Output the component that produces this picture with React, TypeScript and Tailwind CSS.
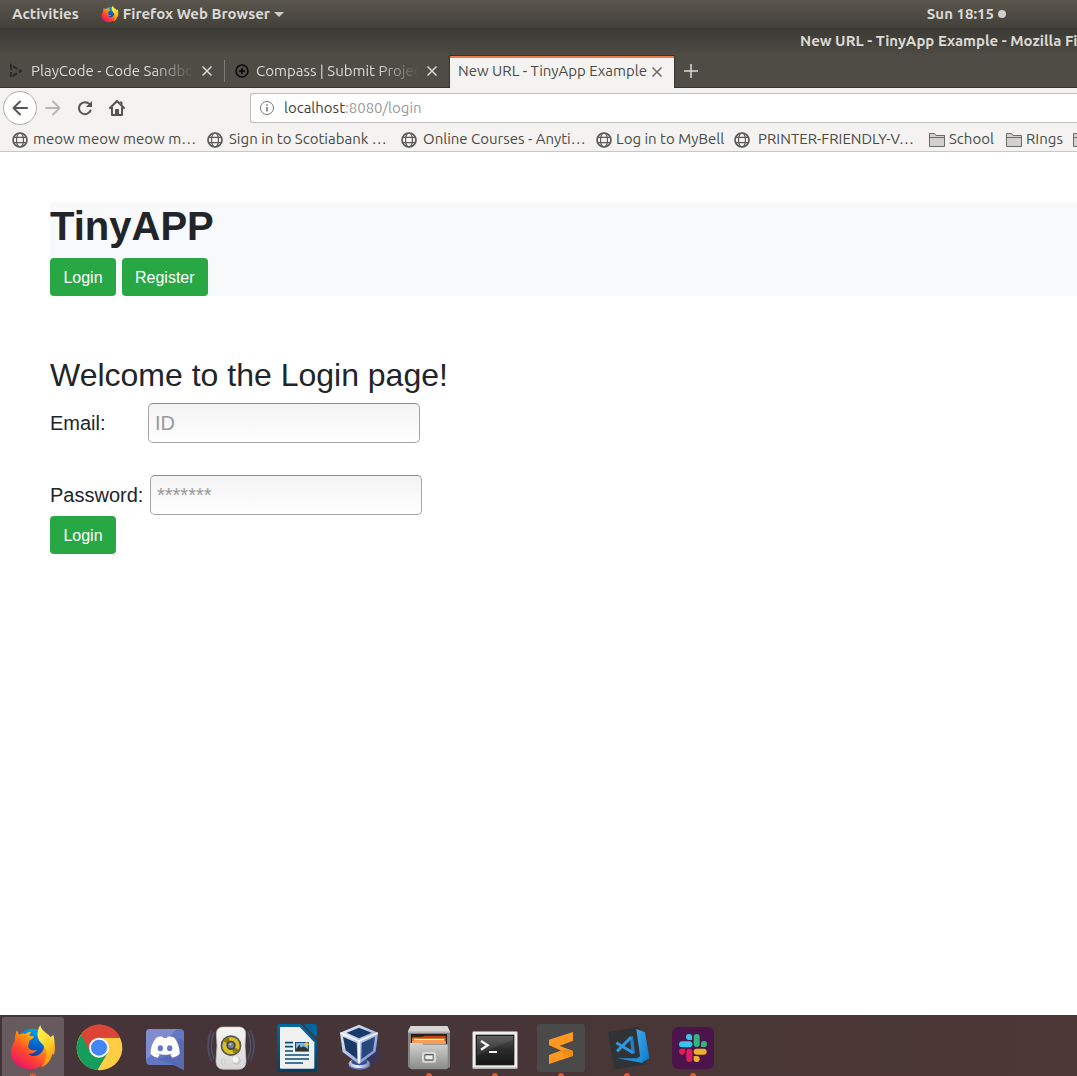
import React from "react";

const barFont = 'font-["Ubuntu","Noto_Sans",sans-serif]';

function FirefoxArt({ id }: { id: string }) {
  return (
    <>
      <defs>
        <linearGradient id={id + "a"} x1="0.8" y1="0" x2="0.1" y2="0.9">
          <stop offset="0" stopColor="#fff14a" />
          <stop offset="0.35" stopColor="#ff9a0c" />
          <stop offset="0.65" stopColor="#ff4530" />
          <stop offset="1" stopColor="#e8126e" />
        </linearGradient>
        <linearGradient id={id + "b"} x1="0.6" y1="0" x2="0.4" y2="1">
          <stop offset="0" stopColor="#00a5e8" />
          <stop offset="0.5" stopColor="#0560cf" />
          <stop offset="1" stopColor="#242a80" />
        </linearGradient>
        <linearGradient id={id + "c"} x1="0.2" y1="0" x2="0.6" y2="1">
          <stop offset="0" stopColor="#fff45a" />
          <stop offset="0.5" stopColor="#ffd62c" />
          <stop offset="1" stopColor="#ff8a0a" />
        </linearGradient>
      </defs>
      <circle cx="98" cy="106" r="50" fill={`url(#${id}b)`} />
      <path
        d="M51 61l6 13c8-4 13-4 18-2 6-5 13-7 20-7-5 4-7 9-6 13l13 1c-1 7-8 9-14 13l-2 11c-4 7 1 17 12 18 9 1 15-4 12-1-4 8-15 13-26 11 10 9 26 9 36 1 11-9 14-21 10-33l30-24c9 29 1 60-17 78-29 33-83 33-104-2-13-22-4-43 5-58 1-12 2-22 7-32z"
        fill={`url(#${id}a)`}
      />
      <path
        d="M121 45c2 14 13 20 25 30 18 17 23 40 15 61l-3-8c-4 21-16 36-34 44 15-21 20-40 11-59-5-11-19-17-22-33-2-14 2-25 8-35z"
        fill={`url(#${id}c)`}
      />
    </>
  );
}

function ChromeArt() {
  return (
    <>
      <circle cx="297" cy="113" r="67" fill="#ffce44" />
      <path d="M297 113L243 74a67 67 0 0 1 117 9z" fill="#db4437" />
      <path d="M243 74a67 67 0 0 0 50 106l31-52-27-15-31-4z" fill="#159d5b" />
      <path d="M297 83h63a67 67 0 0 1-67 97l31-52z" fill="#ffce44" />
      <path d="M243 74l24 44 6-22 24-13h63a67 67 0 0 0-117-9z" fill="#db4437" />
      <circle cx="297" cy="113" r="30" fill="#f3f3f3" />
      <circle cx="297" cy="113" r="24" fill="#4286f5" />
    </>
  );
}

function DiscordArt() {
  return (
    <>
      <path d="M450 57h90q12 0 12 12v111l-30-15h-72q-12 0-12-12V69q0-12 12-12z" fill="#6478c1" />
      <path d="M450 57h80l-92 92V69q0-12 12-12z" fill="#7f8dcf" />
      <path d="M540 84l12 12v84l-30-15-51-17 30-10z" fill="#576bb5" />
      <path
        d="M468 84c9-5 16-5 20-4l2 4h11l2-4c5-1 13 0 21 4 10 14 16 32 15 48-8 7-15 10-22 11l-6-8 8-5c-15 6-33 6-48 0l8 5-6 8c-8-1-15-5-21-11-1-17 5-34 16-48z"
        fill="#fff"
      />
      <ellipse cx="481" cy="115" rx="8" ry="9" fill="#6678c3" />
      <ellipse cx="509" cy="115" rx="8" ry="9" fill="#6678c3" />
    </>
  );
}

function SpeakerArt() {
  return (
    <>
      <defs>
        <linearGradient id="spk" x1="0" y1="0" x2="0" y2="1">
          <stop offset="0" stopColor="#f6f6f5" />
          <stop offset="1" stopColor="#d6d6d5" />
        </linearGradient>
      </defs>
      <g fill="none" stroke="#56668c" strokeWidth="4">
        <path d="M42 66q-16 40 0 82" opacity=".7" />
        <path d="M34 60q-18 48 0 94" opacity=".5" />
        <path d="M28 72q-10 34 0 68" opacity=".35" />
        <path d="M144 66q16 40 0 82" opacity=".7" />
        <path d="M152 60q18 48 0 94" opacity=".5" />
        <path d="M158 72q10 34 0 68" opacity=".35" />
      </g>
      <path
        d="M68 51h50q18 1 19 20l-2 36 3 46q0 24-22 25H70q-22-1-22-25l3-46-2-36q1-19 19-20z"
        fill="url(#spk)"
        stroke="#c4c4c2"
        strokeWidth="2"
      />
      <circle cx="93" cy="107" r="31" fill="#56564f" />
      <circle cx="93" cy="107" r="26" fill="#dcc01f" />
      <path d="M93 107L70 94a25 25 0 0 1 16-12zM93 107l24 12a25 25 0 0 1-16 12z" fill="#917b0d" />
      <circle cx="93" cy="106" r="14" fill="#42454a" />
      <circle cx="93" cy="106" r="9" fill="#787f89" />
      <circle cx="91" cy="103" r="3" fill="#d7dce1" />
      <circle cx="110" cy="152" r="12" fill="#c8c8c7" />
      <circle cx="107" cy="149" r="9" fill="#f6f6f5" />
      <path d="M64 151l6-4 6 4v9l-6 4-6-4z" fill="none" stroke="#c4c4c3" strokeWidth="2" />
    </>
  );
}

function WriterArt() {
  return (
    <>
      <defs>
        <linearGradient id="wr" x1="0" y1="0" x2="0" y2="1">
          <stop offset="0" stopColor="#0369a3" />
          <stop offset="1" stopColor="#063f62" />
        </linearGradient>
      </defs>
      <path d="M240 42h62l49 50v86q0 8-8 8H240q-8 0-8-8V50q0-8 8-8z" fill="url(#wr)" />
      <path d="M314 42h29q8 0 8 8v28q-4 3-8-1l-27-27q-5-5-2-8z" fill="#0365a0" />
      <path d="M243 51h56l44 46v76q0 3-3 3h-97q-3 0-3-3V54q0-3 3-3z" fill="#f0f0ef" />
      <g stroke="#064e79" strokeWidth="5">
        <path d="M255 98h24M255 110h24M255 123h24M255 135h72M255 147h72M255 159h54" />
      </g>
      <path d="M285 96h42v29h-42z" fill="#17517e" />
      <path d="M288 99h36v24h-36z" fill="#7fb5e5" />
      <circle cx="320" cy="103" r="6" fill="#f2c53d" />
      <path d="M288 123v-7l5-5 5-7 5 9 6-4 6 2 9 7v5z" fill="#34342f" />
    </>
  );
}

function VirtualBoxArt() {
  return (
    <>
      <defs>
        <linearGradient id="vb" x1="0" y1="0" x2="1" y2="1">
          <stop offset="0" stopColor="#e9f0fa" />
          <stop offset="0.6" stopColor="#a4b7e2" />
          <stop offset="1" stopColor="#6781cd" />
        </linearGradient>
        <linearGradient id="vbbase" x1="0" y1="0" x2="1" y2="0">
          <stop offset="0" stopColor="#9fb0d8" />
          <stop offset="0.4" stopColor="#f0f4fb" />
          <stop offset="1" stopColor="#6f84c2" />
        </linearGradient>
        <radialGradient id="vbglow">
          <stop offset="0" stopColor="#2b3279" stopOpacity="0.8" />
          <stop offset="1" stopColor="#2b3279" stopOpacity="0" />
        </radialGradient>
      </defs>
      <ellipse cx="512" cy="132" rx="36" ry="46" fill="url(#vbglow)" />
      <ellipse cx="478" cy="165" rx="32" ry="14" fill="#6c80b8" />
      <ellipse cx="478" cy="160" rx="32" ry="14" fill="url(#vbbase)" />
      <ellipse cx="478" cy="155" rx="24" ry="11" fill="#3d4c88" />
      <path d="M477 44l57 24-7 57-50 38-49-37-8-58z" fill="url(#vb)" />
      <path d="M477 53l38 15-38 17-37-17z" fill="#1b3a67" />
      <path d="M429 80l41 19 2 49-35-27z" fill="#1a3964" />
      <path d="M485 99l40-19-6 42-35 26z" fill="#26487b" />
      <path d="M421 69l56 24 56-24" fill="none" stroke="#f4f8fd" strokeWidth="5" />
      <path d="M477 93v67" fill="none" stroke="#f4f8fd" strokeWidth="7" />
    </>
  );
}

function FilesArt() {
  return (
    <>
      <defs>
        <linearGradient id="fl" x1="0" y1="0" x2="0" y2="1">
          <stop offset="0" stopColor="#d2d2d1" />
          <stop offset="1" stopColor="#8a8a89" />
        </linearGradient>
      </defs>
      <path d="M32 48h110l8 18v102q0 6-6 6H30q-6 0-6-6V60z" fill="#858584" />
      <path d="M32 48h110l8 17H24z" fill="#d7d7d6" />
      <path d="M24 63h126v5H24z" fill="#c1c1c0" />
      <path d="M33 72h108v30H33z" fill="#241f1d" />
      <path d="M38 80h30l4-3h65v25H37z" fill="#bd431d" />
      <path d="M36 84h100v18H36z" fill="#e97822" />
      <path d="M42 87h90v4H42z" fill="#fff4e8" />
      <path d="M36 93h101v9H36z" fill="#f4a04d" />
      <path d="M31 99h35l4 5h73v70q0 4-4 4H35q-5 0-5-5v-74z" fill="url(#fl)" />
      <rect x="66" y="126" width="42" height="32" rx="6" fill="#d8d8d7" />
      <rect x="73" y="132" width="28" height="20" rx="3" fill="#5d5d5c" />
      <rect x="76" y="136" width="22" height="12" fill="#eee" />
    </>
  );
}

function TerminalArt() {
  return (
    <>
      <defs>
        <linearGradient id="tm" x1="0" y1="0" x2="0" y2="1">
          <stop offset="0" stopColor="#555" />
          <stop offset="0.5" stopColor="#2b2b2b" />
          <stop offset="1" stopColor="#171717" />
        </linearGradient>
      </defs>
      <rect x="217" y="64" width="136" height="113" rx="4" fill="#b7b7b6" />
      <rect x="219" y="66" width="132" height="106" rx="3" fill="#efefee" />
      <rect x="227" y="74" width="116" height="92" fill="#1c1c1c" />
      <rect x="231" y="78" width="109" height="84" fill="url(#tm)" />
      <path d="M231 78h109v11q-50 18-109 50z" fill="#fff" opacity=".07" />
      <path d="M243 93l20 13-20 13" fill="none" stroke="#f2f2f2" strokeWidth="7" />
      <path d="M267 126h24" stroke="#f4f4f4" strokeWidth="6" />
    </>
  );
}

function SublimeArt() {
  return (
    <>
      <rect x="411" y="42" width="144" height="144" rx="9" fill="#4a4a4a" />
      <path d="M447 89l72-23v26l-41 16 41 15v15l-72 24v-27l38-14-38-16z" fill="#ff9820" />
      <path d="M447 89v16l72 33v-15l-41-15z" fill="#ff9820" />
      <path d="M478 124l24-8 17 7v15l-8 2z" fill="#e88410" opacity=".7" />
    </>
  );
}

function CodeArt() {
  return (
    <>
      <defs>
        <linearGradient id="vs" x1="0" y1="0" x2="1" y2="1">
          <stop offset="0" stopColor="#43a7ea" />
          <stop offset="1" stopColor="#0878cb" />
        </linearGradient>
      </defs>
      <path d="M54 67l94-17 20 114-96 14z" fill="#303234" />
      <path d="M139 57l26 10 13 78-25 14z" fill="url(#vs)" />
      <path d="M80 145l61 0 13-9 4 23z" fill="#1e8edb" />
      <path d="M119 80l10-2 6 52-10 2z" fill="#1c7ec4" />
      <path d="M79 98l50 30M81 124l42-42" stroke="#2f95dc" strokeWidth="9" fill="none" />
    </>
  );
}

function SlackArt() {
  return (
    <>
      <rect x="246" y="51" width="126" height="127" rx="19" fill="#4b154b" />
      <path d="M306 90h-8a9 9 0 1 1 8-9z" fill="#36c5f0" />
      <rect x="267" y="94" width="40" height="18" rx="9" fill="#36c5f0" />
      <rect x="311" y="72" width="18" height="39" rx="9" fill="#2eb67d" />
      <path d="M333 111v-8a9 9 0 1 1 9 8z" fill="#2eb67d" />
      <rect x="311" y="116" width="39" height="18" rx="9" fill="#ecb22e" />
      <path d="M311 138h8a9 9 0 1 1-8 9z" fill="#ecb22e" />
      <rect x="289" y="116" width="18" height="40" rx="9" fill="#e01e5a" />
      <path d="M285 116v8a9 9 0 1 1-9-8z" fill="#e01e5a" />
    </>
  );
}

const dock: { name: string; view: string; art: React.ReactNode; running?: boolean; active?: boolean }[] = [
  { name: "Firefox", view: "0 15 198 183", art: <FirefoxArt id="dockfx" />, running: true, active: true },
  { name: "Chrome", view: "198 15 198 183", art: <ChromeArt /> },
  { name: "Discord", view: "396 15 198 183", art: <DiscordArt /> },
  { name: "Rhythmbox", view: "-6 15 198 183", art: <SpeakerArt /> },
  { name: "Writer", view: "192 15 198 183", art: <WriterArt /> },
  { name: "VirtualBox", view: "390 15 198 183", art: <VirtualBoxArt /> },
  { name: "Files", view: "-12 15 198 183", art: <FilesArt />, running: true },
  { name: "Terminal", view: "186 15 198 183", art: <TerminalArt />, running: true },
  { name: "Sublime Text", view: "384 15 198 183", art: <SublimeArt />, running: true },
  { name: "Visual Studio Code", view: "12 15 198 183", art: <CodeArt />, running: true },
  { name: "Slack", view: "210 15 198 183", art: <SlackArt />, running: true },
];

function Globe() {
  return (
    <svg viewBox="0 0 16 16" className="size-4 shrink-0" fill="none" stroke="#5b5b58">
      <circle cx="8" cy="8" r="7" strokeWidth="1.7" />
      <ellipse cx="8" cy="8" rx="3.5" ry="7" strokeWidth="1.2" />
      <path d="M2 5.3h12M2 10.7h12" strokeWidth="1.2" />
    </svg>
  );
}

function Folder() {
  return (
    <svg viewBox="0 0 16 16" className="size-4 shrink-0" fill="#d2d1cf" stroke="#6b6b68">
      <path d="M.5 14.5v-13h5l1.5 2h8.5v11z" />
      <path d="M.5 5.5h15" />
    </svg>
  );
}

function Cross({ color }: { color: string }) {
  return (
    <svg viewBox="0 0 10 10" className="size-[10px]" stroke={color} strokeWidth="1.5">
      <path d="M.5.5l9 9M9.5.5l-9 9" />
    </svg>
  );
}

const bookmarks = [
  { text: "meow meow meow m…", size: "w-[195px] gap-[5px]" },
  { text: "Sign in to Scotiabank …", size: "w-[194px] gap-[6px]" },
  { text: "Online Courses - Anyti…", size: "w-[195px] gap-[6px]" },
  { text: "Log in to MyBell", size: "w-[138px] gap-1" },
  { text: "PRINTER-FRIENDLY-V…", size: "w-[195px] gap-2" },
  { text: "School", size: "w-[77px] gap-1", folder: true },
  { text: "RIngs", size: "w-[67px] gap-1", folder: true },
  { text: "", size: "w-4", folder: true },
];

function Header() {
  return (
    <header className={barFont}>
      <div className="flex h-7 items-center bg-linear-to-b from-[#5a564d] to-[#42413a] text-[15px] font-semibold text-[#dbd9d4]">
        <div className="flex flex-1 items-center pl-3">
          <button>Activities</button>
          <button className="ml-[22px] flex items-center gap-1">
            <svg viewBox="30 42 138 142" className="size-[18px]">
              <FirefoxArt id="topfx" />
            </svg>
            <span>Firefox Web Browser</span>
            <svg viewBox="0 0 10 5" className="h-[5px] w-[10px]" fill="#cfcdc8">
              <path d="M0 0h10L5 5z" />
            </svg>
          </button>
        </div>
        <button className="mr-[71px] flex items-center gap-1">
          <span>Sun 18:15</span>
          <span className="size-2 rounded-full bg-[#d0cfcc]" />
        </button>
      </div>
      <div className="flex h-[27px] items-center justify-end overflow-hidden bg-linear-to-b from-[#3a3934] to-[#4e4b44] text-[15px] font-semibold text-[#dbd9d4]">
        <span className="w-[277px] whitespace-nowrap">New URL - TinyApp Example - Mozilla Firefox</span>
      </div>

      <div role="tablist" className="flex h-[33px] items-stretch border-b border-[#35342f] bg-[#4f4c45] text-[15px] text-[#dbd9d4]">
        <div role="tab" className="flex w-56 items-center pl-2">
          <svg viewBox="0 0 16 16" className="size-4 shrink-0" fill="none" stroke="#2a2a28" strokeWidth="2">
            <path d="M3 2v12l10-6z" strokeDasharray="5 2" />
          </svg>
          <span className="ml-[7px] w-[163px] overflow-hidden mask-r-from-75% mask-r-to-100% whitespace-nowrap">PlayCode - Code Sandbox</span>
          <button aria-label="Close tab" className="ml-1 p-1"><Cross color="#dbd9d4" /></button>
        </div>
        <div className="my-[5px] w-px bg-[#7d7b75]" />
        <div role="tab" className="flex w-56 items-center pl-[9px]">
          <svg viewBox="0 0 16 16" className="size-4 shrink-0" fill="none" stroke="#080808">
            <circle cx="8" cy="8" r="6" strokeWidth="1.5" />
            <path d="M8 5v6M5 8h6" strokeWidth="1.5" />
            <circle cx="8" cy="8" r="1" fill="#080808" />
          </svg>
          <span className="ml-[6px] w-[163px] overflow-hidden mask-r-from-75% mask-r-to-100% whitespace-nowrap">Compass | Submit Project</span>
          <button aria-label="Close tab" className="ml-1 p-1"><Cross color="#dbd9d4" /></button>
        </div>
        <div role="tab" aria-selected="true" className="-mb-px flex w-[226px] items-center border-x border-t border-[#35342f] bg-[#f4f3f2] text-[#4a4a46]">
          <div className="flex h-full w-full items-center border-t-2 border-[#ef7c4c] pb-[3px] pl-2">
            <span className="w-[190px] whitespace-nowrap">New URL - TinyApp Example</span>
            <button aria-label="Close tab" className="p-1"><Cross color="#6a6a66" /></button>
          </div>
        </div>
        <button aria-label="New tab" className="px-[9px]">
          <svg viewBox="0 0 14 14" className="size-[14px]" stroke="#dbd9d4" strokeWidth="1.5">
            <path d="M7 0v14M0 7h14" />
          </svg>
        </button>
      </div>

      <div className="flex h-10 items-center bg-[#f4f3f2] pl-[3px]">
        <button aria-label="Back" className="flex size-[34px] items-center justify-center rounded-full border border-[#b0afac] bg-white">
          <svg viewBox="0 0 16 16" className="size-4" fill="none" stroke="#555552" strokeWidth="2">
            <path d="M15 8H1.5M8 1.5L1.5 8 8 14.5" strokeLinecap="round" strokeLinejoin="round" />
          </svg>
        </button>
        <button aria-label="Forward" className="ml-2">
          <svg viewBox="0 0 16 16" className="size-4" fill="none" stroke="#b8b7b4" strokeWidth="2">
            <path d="M1 8h13.5M8 1.5L14.5 8 8 14.5" strokeLinecap="round" strokeLinejoin="round" />
          </svg>
        </button>
        <button aria-label="Reload" className="ml-4">
          <svg viewBox="0 0 16 16" className="size-4" fill="none" stroke="#555552" strokeWidth="2">
            <path d="M13.5 10.5A6 6 0 1 1 12.5 4.2" strokeLinecap="round" />
            <path d="M15 1v6H9z" fill="#555552" stroke="none" />
          </svg>
        </button>
        <button aria-label="Home" className="ml-4">
          <svg viewBox="0 0 16 16" className="size-4" fill="none" stroke="#555552" strokeWidth="2">
            <path d="M1 8l7-7 7 7M3 7.5V15h10V7.5" strokeLinecap="round" strokeLinejoin="round" />
            <path d="M6.500 15v-5.500h3V15zM11 2h2v3" fill="#555552" strokeWidth="1" />
          </svg>
        </button>
        <div className="ml-[125px] flex h-[30px] flex-1 items-center gap-[10px] rounded-l-[3px] border border-r-0 border-[#bfbebb] bg-white pl-[9px]">
          <svg viewBox="0 0 14 14" className="size-[14px]" fill="none" stroke="#777774">
            <circle cx="7" cy="7" r="6.5" />
            <path d="M7 6v4.5M7 3.2v1.500" strokeWidth="1.6" />
          </svg>
          <div className="flex text-[15px] text-[#9a9a98]">
            <span className="text-[#3f3f3c]">localhost</span>:8080/login
          </div>
        </div>
      </div>

      <nav className="flex h-6 items-center overflow-hidden border-b border-[#c8c7c5] bg-[#f4f3f2] pl-3 text-[15px] text-[#4a4a46]">
        {bookmarks.map((b, i) => (
          <a key={i} href="#" className={`flex shrink-0 items-center whitespace-nowrap ${b.size}`}>
            {b.folder ? <Folder /> : <Globe />}
            <span>{b.text}</span>
          </a>
        ))}
      </nav>
    </header>
  );
}

const green = "min-w-[66px] rounded-sm bg-[#28a745] px-[13px] pt-2 pb-[6px] text-base text-white";
const field =
  "h-10 w-[272px] rounded-[5px] border border-[#a4a4a4] border-t-[#8c8c8c] bg-linear-to-b from-[#f3f3f3] to-white px-[6px] text-xl placeholder:text-[#999]";

export default function App() {
  return (
    <div className="flex min-h-screen flex-col bg-white">
      <Header />
      <main className='flex-1 pt-[50px] pl-[50px] font-["Liberation_Sans",Arial,sans-serif] text-[#212529]'>
        <div className="bg-[#f8f9fa]">
          <h1 className="mb-2 text-[40px] leading-12 font-bold">TinyAPP</h1>
          <div className="flex gap-[6px]">
            <button className={green}>Login</button>
            <button className={green}>Register</button>
          </div>
        </div>
        <form className="mt-[59px]" onSubmit={(e) => e.preventDefault()}>
          <h2 className="mb-2 text-[32px] leading-10">Welcome to the Login page!</h2>
          <div className="flex items-center text-xl">
            <label htmlFor="email" className="w-[98px]">Email:</label>
            <input id="email" type="email" placeholder="ID" className={field} />
          </div>
          <div className="mt-8 mb-px flex items-center text-xl">
            <label htmlFor="password" className="w-[100px]">Password:</label>
            <input id="password" type="password" placeholder="*******" className={field} />
          </div>
          <button type="submit" className={green}>Login</button>
        </form>
      </main>
      <footer className="flex h-[61px] overflow-hidden bg-linear-to-r from-[#443338] to-[#4c3936]">
        {dock.map((d) => (
          <button key={d.name} aria-label={d.name} className="h-[61px] w-[66px] shrink-0">
            <svg viewBox={d.view} className="h-[61px] w-[66px]">
              {d.active && <rect x="6" y="21" width="186" height="190" rx="7" fill="#665a5e" />}
              {d.art}
              {d.running && (
                <circle cx={Number(d.view.split(" ")[0]) + 99} cy="198" r="9" fill="#e95420" />
              )}
            </svg>
          </button>
        ))}
      </footer>
    </div>
  );
}
